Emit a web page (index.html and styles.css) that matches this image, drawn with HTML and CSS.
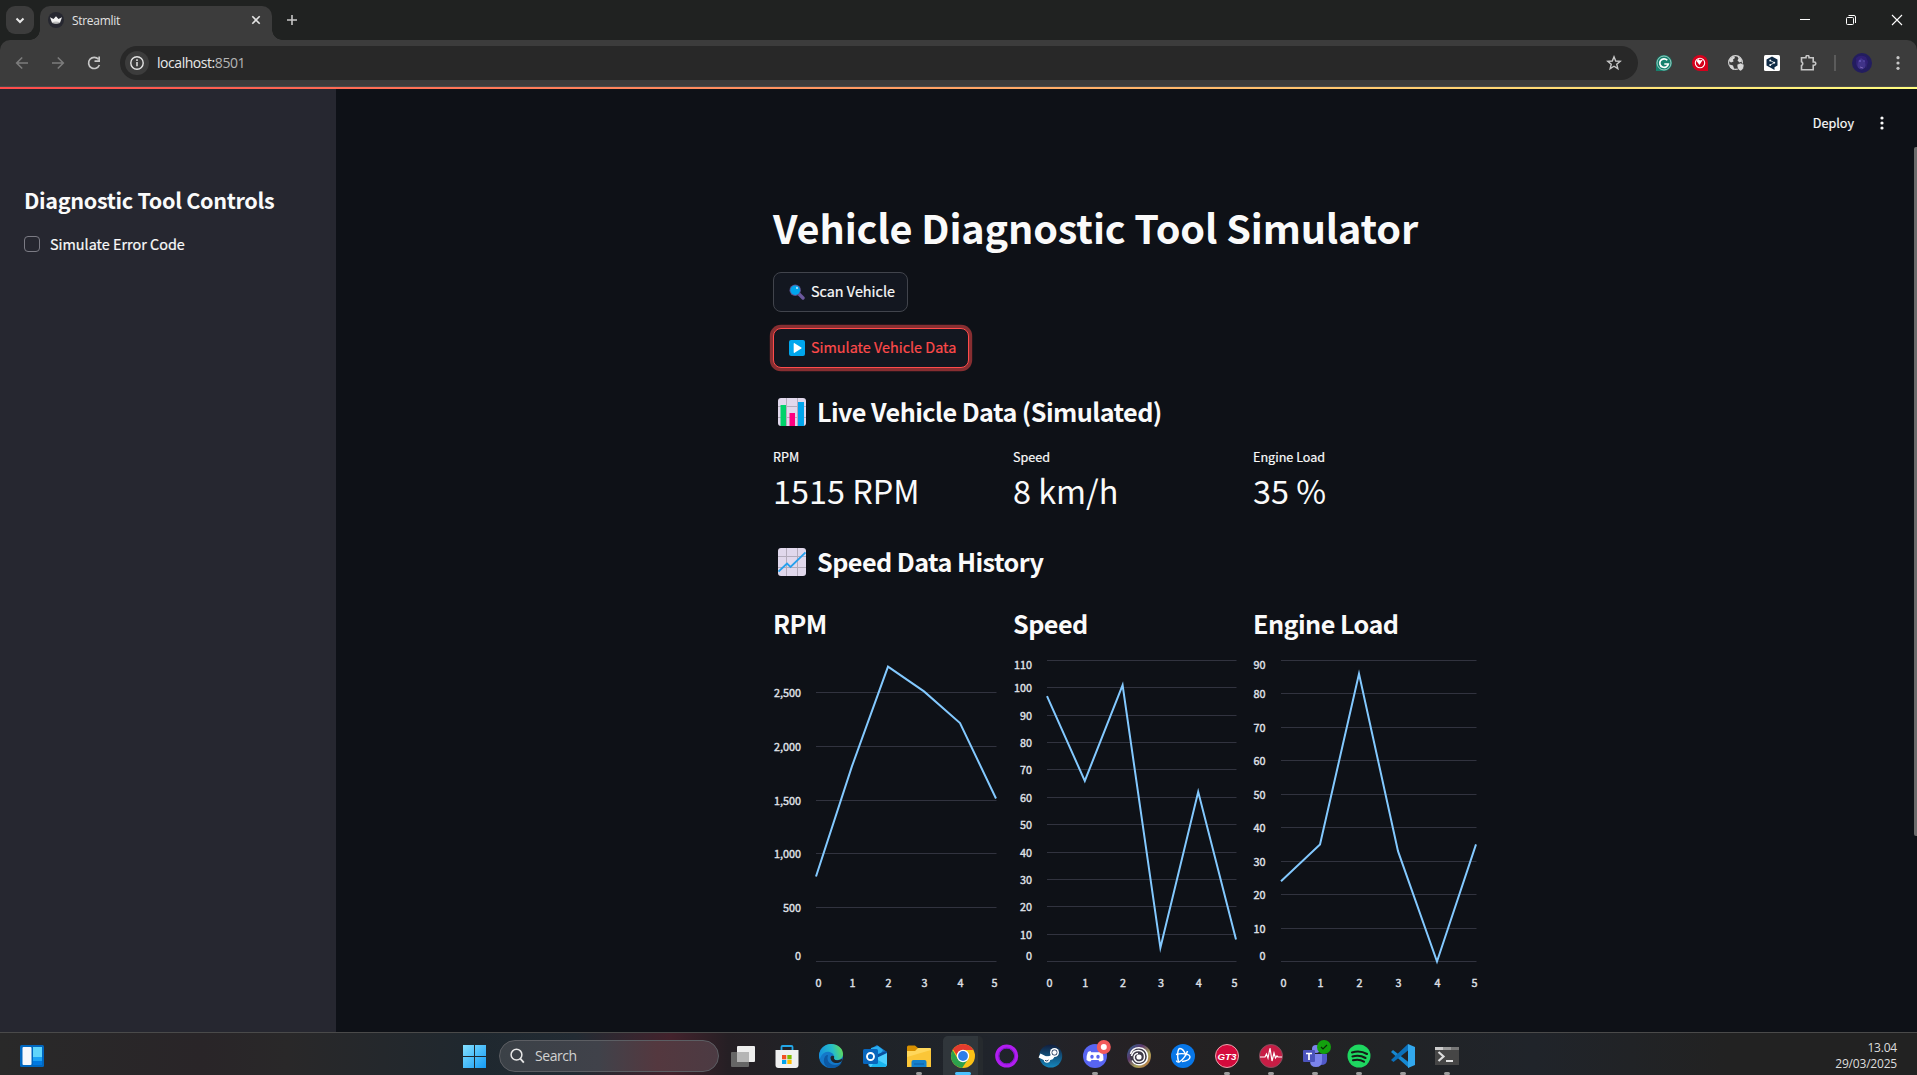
FILE: index.html
```html
<!DOCTYPE html>
<html lang="en">
<head>
<meta charset="utf-8">
<title>Streamlit</title>
<link rel="stylesheet" href="styles.css">
</head>
<body>
<div class="screen">
  <header class="tabbar">
    <div class="tabsearch"><svg width="28" height="28"><path d="M10.5 12.5l3.5 3.5 3.5-3.5" fill="none" stroke="#e8e8e8" stroke-width="2"/></svg></div>
    <div class="tab">
      <svg class="favicon" width="16" height="16" viewBox="0 0 16 16"><circle cx="8" cy="8" r="8" fill="#262730"/><path d="M2 5.300l3.500 1.600L8 4.200l2.500 2.700L14 5.300 12 10.800Q8 12 4 10.800z" fill="#f2f2f2"/><path d="M4 10.300Q8 8.600 12 10.300v.700Q8 12.300 4 11z" fill="#bbb"/></svg>
      <span class="tabtitle">Streamlit</span>
      <svg class="tabclose" width="10" height="10"><path d="M1.300 1.300l7.400 7.400M8.700 1.300L1.300 8.700" stroke="#e3e3e3" stroke-width="1.600"/></svg>
    </div>
    <svg class="newtab" width="12" height="12"><path d="M6 1v10M1 6h10" stroke="#c7c7c7" stroke-width="1.600"/></svg>
    <div class="winbtns">
      <svg width="46" height="40"><path d="M18 19.500h10" stroke="#fff"/></svg>
      <svg width="46" height="40"><g fill="none" stroke="#fff"><rect x="18.500" y="17.500" width="7" height="7" rx="1"/><path d="M20.500 15.500h5.500a1.500 1.500 0 0 1 1.500 1.500v6"/></g></svg>
      <svg width="46" height="40"><path d="M18 15l10 10M28 15L18 25" stroke="#fff" stroke-width="1.100"/></svg>
    </div>
  </header>
  <div class="toolbar">
    <div class="nav">
      <svg width="36" height="36"><path d="M24 18H13M18.200 12.500L12.700 18l5.500 5.500" fill="none" stroke="#7c7c7c" stroke-width="1.600"/></svg>
      <svg width="36" height="36"><path d="M12 18h11M17.800 12.500l5.500 5.500-5.500 5.500" fill="none" stroke="#7c7c7c" stroke-width="1.600"/></svg>
      <svg width="36" height="36"><path d="M22.500 14.300A5.600 5.600 0 1 0 23.400 20" fill="none" stroke="#c7c7c7" stroke-width="1.700"/><path d="M24 11.500v5.500h-5.500v-1.700h3.800v-3.800z" fill="#c7c7c7"/></svg>
    </div>
    <div class="address">
      <svg class="info" width="24" height="24"><circle cx="12" cy="12" r="12" fill="#3c3c3c"/><circle cx="12" cy="12" r="6.200" fill="none" stroke="#e3e3e3" stroke-width="1.400"/><path d="M12 11v4.200M12 8.300v1.600" stroke="#e3e3e3" stroke-width="1.500"/></svg>
      <span class="url">localhost:<span>8501</span></span>
      <svg class="star" width="16" height="16" viewBox="0 0 16 16"><path d="M8 1.800l1.700 4.200 4.500.350-3.450 2.900 1.100 4.400L8 11.250l-3.850 2.400 1.100-4.400L1.800 6.350 6.300 6z" fill="none" stroke="#c7c7c7" stroke-width="1.400"/></svg>
    </div>
    <div class="exts">
      <svg width="16" height="16"><path d="M8 0a8 8 0 0 1 8 8 8 8 0 0 1-8 8H0V8a8 8 0 0 1 8-8z" fill="#16806d"/><circle cx="8" cy="8" r="7" fill="none" stroke="#d5efe9" stroke-width=".7"/><path d="M11.300 5.300A4.300 4.300 0 1 0 12.300 9H8.300" fill="none" stroke="#fff" stroke-width="1.700"/></svg>
      <svg width="16" height="16"><path d="M8 0a8 8 0 0 1 8 8v8H8A8 8 0 0 1 8 0z" fill="#d6001c"/><circle cx="8" cy="8" r="4.700" fill="none" stroke="#fff" stroke-width="1.100"/><path d="M4.500 6L6.500 4l1.500 1.500L11 4.500 7.500 10 6 8z" fill="#fff"/></svg>
      <svg width="16" height="16"><circle cx="7.500" cy="7.500" r="6.900" fill="none" stroke="#d6d6d6" stroke-width="1.100"/><path d="M2 3.500l4-2.500 1 2-2 1.500.5 2-2.500 1L1 6zM1.500 9.500l3.500 1 1 3-.5 1.500-3-2zM9 1l4 2.500 1 3-2.500 1-2-2 1-2z" fill="#d6d6d6"/><path d="M12.500 8l3.500 1.500c0 3.500-1 5.500-3.500 6.500-2.500-1-3.500-3-3.500-6.500z" fill="#d8d8d8" stroke="#3c3c3c" stroke-width=".6"/></svg>
      <svg width="16" height="16"><rect width="16" height="16" rx="1.500" fill="#fff"/><path d="M8 1.500l5.500 3v6l-3 1.800V15L8 13.500l-5.500-3v-6z" fill="#0f2b46"/><path d="M6.300 5.500l4 2.200-4 2.300" fill="none" stroke="#fff" stroke-width=".8"/><circle cx="6.200" cy="5.500" r=".9" fill="#fff"/><circle cx="10.300" cy="7.700" r=".9" fill="#fff"/><circle cx="6.200" cy="10" r=".9" fill="#fff"/></svg>
      <svg class="puzzle" width="17" height="17"><path d="M1.500 2.800H6V2a1.500 1.500 0 0 1 3 0v.8h4.200V7h1a1.600 1.600 0 0 1 0 3.200h-1v4.600H1.500v-4.300a2 2 0 0 0 0-3.700z" fill="none" stroke="#c7c7c7" stroke-width="1.600"/></svg>
      <i class="divider"></i>
      <svg class="avatar" width="20" height="20"><circle cx="10" cy="10" r="10" fill="#231d5f"/><ellipse cx="9.500" cy="10" rx="5" ry="6.500" fill="#403388"/><path d="M4 5q4-4 10-1l2 5-2 7-1-8-4-3-3 3-1 7z" fill="#302075"/><circle cx="8" cy="8" r="1" fill="#6657b8"/><circle cx="12" cy="8" r=".8" fill="#5f50af"/><path d="M8 14l3 1" stroke="#7861b0"/></svg>
      <svg class="kebab" width="4" height="16"><g fill="#c7c7c7"><circle cx="2" cy="2.700" r="1.600"/><circle cx="2" cy="8" r="1.600"/><circle cx="2" cy="13.300" r="1.600"/></g></svg>
    </div>
  </div>
  <main class="app">
    <aside class="sidebar">
      <h2>Diagnostic Tool Controls</h2>
      <label class="check"><i></i><span>Simulate Error Code</span></label>
    </aside>
    <section class="content">
      <div class="appmenu"><span>Deploy</span><svg width="4" height="14"><g fill="#fafafa"><circle cx="2" cy="2" r="1.600"/><circle cx="2" cy="7" r="1.600"/><circle cx="2" cy="12" r="1.600"/></g></svg></div>
      <div class="scroll"></div>
      <div class="block">
        <h1>Vehicle Diagnostic Tool Simulator</h1>
        <button class="btn"><svg width="16" height="16" viewBox="0 0 16 16"><path d="M9.500 9.500L14 14" stroke="#6b589c" stroke-width="3.400" stroke-linecap="round"/><circle cx="6.200" cy="6.200" r="5.700" fill="#5c528f"/><circle cx="6.200" cy="6.200" r="4.800" fill="#00a6ed"/><ellipse cx="8" cy="3.900" rx=".9" ry="1.200" fill="#b8e8ff"/></svg><span>Scan Vehicle</span></button>
        <button class="btn active"><svg width="16" height="16" viewBox="0 0 16 16"><rect width="16" height="16" rx="2" fill="#00a6ed"/><path d="M4.700 3.700v8.600q0 1 .9.500l6.700-4.200q.8-.6 0-1.200L5.600 3.200q-.9-.5-.9.500z" fill="#fff"/></svg><span>Simulate Vehicle Data</span></button>
        <h3 class="live"><svg width="28" height="28"><rect width="28" height="28" rx="3" fill="#e1d8ec"/><path d="M8.500 0v28M19.500 0v28M0 8.500h28M0 19.500h28" stroke="#b4acbc"/><path d="M2.500 7H8v21H2.500z" fill="#00d26a"/><path d="M11.500 15h5.500v13h-5.500z" fill="#ff0080"/><path d="M20 4h6v24h-6z" fill="#00a6ed"/></svg><span>Live Vehicle Data (Simulated)</span></h3>
        <div class="cols metrics">
          <div><p>RPM</p><strong>1515 RPM</strong></div>
          <div><p>Speed</p><strong>8 km/h</strong></div>
          <div><p>Engine Load</p><strong>35 %</strong></div>
        </div>
        <h3 class="history"><svg width="28" height="28"><rect width="28" height="28" rx="3" fill="#e1d8ec"/><path d="M8.500 0v28M19.500 0v28M0 8.500h28M0 19.500h28" stroke="#b4acbc"/><path d="M.5 23.500L9 15.500l3.500 3.500L27.500 4.500" fill="none" stroke="#26a0ec" stroke-width="1.800"/></svg><span>Speed Data History</span></h3>
        <div class="cols charts">
          <div><h3>RPM</h3><svg class="chart" width="240" height="360"></svg></div>
          <div><h3>Speed</h3><svg class="chart" width="240" height="360"></svg></div>
          <div><h3>Engine Load</h3><svg class="chart" width="240" height="360"></svg></div>
        </div>
      </div>
    </section>
  </main>
  <footer class="taskbar">
    <svg class="widgets" width="24" height="22"><rect width="24" height="22" rx="1.500" fill="#0067c0"/><rect x="2.500" y="2" width="9" height="18" rx="1" fill="#f5f8fc"/><path d="M13 2h9v10h-9z" fill="#60d5fb"/><path d="M13 12h9v4h-9z" fill="#1ba2f5"/><path d="M13 16h9v4h-9z" fill="#0078e0"/></svg>
    <svg class="start" width="24" height="24"><defs><linearGradient id="win" x2="1" y2="1"><stop stop-color="#83e0ff"/><stop offset="1" stop-color="#149bf5"/></linearGradient></defs><path d="M0 1h11v11H0zM12 1h11v11H12zM0 13h11v11H0zM12 13h11v11H12z" fill="url(#win)"/></svg>
    <div class="search"><svg width="16" height="16"><circle cx="6.500" cy="6.700" r="5.400" fill="none" stroke="#e8e8e8" stroke-width="1.500"/><path d="M10.300 10.700l3.500 3.900" stroke="#e8e8e8" stroke-width="1.800"/></svg><span>Search</span></div>
    <div class="apps">
      <div><svg viewBox="0 0 24 24"><rect y="8" width="18" height="15" rx="1" fill="#666"/><rect x="6" y="2" width="18" height="16" rx="1" fill="#eee"/><path d="M6 8h12v10H6z" fill="#b5b5b5"/></svg></div>
      <div><svg viewBox="0 0 24 24"><path d="M6.500 7V3q0-1 1-1h9q1 0 1 1v4" fill="none" stroke="#23a7e8" stroke-width="1.800"/><path d="M.5 6h23v15q0 3-3 3h-17q-3 0-3-3z" fill="#f0f0f0"/><path d="M7 11h4.300v4.300H7z" fill="#f25022"/><path d="M12.300 11h4.300v4.300h-4.300z" fill="#7fba00"/><path d="M7 16h4.300v4H7z" fill="#00a4ef"/><path d="M12.300 16h4.300v4h-4.300z" fill="#ffb900"/></svg></div>
      <div><svg viewBox="0 0 24 24"><defs><linearGradient id="ed" x2="1" y1=".4" y2=".2"><stop stop-color="#1593dd"/><stop offset=".55" stop-color="#26bdc9"/><stop offset="1" stop-color="#68df4b"/></linearGradient></defs><circle cx="12" cy="12" r="12" fill="#1478c9"/><path d="M0 11C1 4 6 0 12 0c7 0 12 4.500 12 10 0 4-3 6-6.500 6-3 0-3.500-1.500-2.500-3 .5-4-6-7-10-4-3 2-4 6-4.500 6z" fill="url(#ed)"/><path d="M9 11.500c-2 5 2 9.500 7 9.500 3 0 5.500-1 7-3-2 4-6 6-10.500 6C6 24 3 17.500 6 12.500c1-1.500 3-2 3-1z" fill="#0c59a4"/><path d="M11.500 13.500c.2-2 3-2.500 3.800-.8-1 1.800 0 3.300 2.700 3.600 2.500.2 4.500-1 5.500-1.700l-.8 2.400c-1.500 1.500-3 2-5 2-3.500 0-6.200-2-6.200-5.500z" fill="#20242a"/></svg></div>
      <div><svg viewBox="0 0 24 24"><path d="M4 7l10-6 10 7v12q0 3-3 3H8q-3 0-3-3z" fill="#1478c9"/><path d="M8 4l7-2 5 4-4 6H8z" fill="#2aaef0"/><path d="M15 10l8-3 1 2-9 6z" fill="#0a4f9e"/><path d="M5 18L24 9v11q0 3-3 3H7z" fill="#4ccfff"/><path d="M13 15l11 6q-1 2-3 2H8z" fill="#19b4ee"/><rect y="5" width="15" height="15" rx="1.500" fill="#0866bd"/><circle cx="7.500" cy="12.500" r="3.500" fill="none" stroke="#fff" stroke-width="1.900"/></svg></div>
      <div class="run"><svg viewBox="0 0 24 24"><path d="M0 3q0-1.500 1.500-1.500H8L11 4h11q2 0 2 2v4H0z" fill="#d89000"/><path d="M0 7h8l3-3h12q1 0 1 1v18H0z" fill="#ffd75b"/><path d="M0 13l24-7v17H0z" fill="#fbc638"/><path d="M4.500 23v-5q0-2 2-2h11q2 0 2 2v5z" fill="#1481cb"/><path d="M7 20h10" stroke="#0e5ca6"/></svg></div>
      <div class="current"><svg viewBox="0 0 24 24"><circle cx="12" cy="12" r="12" fill="#fbc116"/><path d="M1.610 6A12 12 0 0 1 22.390 6H12z" fill="#e33b2e"/><path d="M1.610 6a12 12 0 0 0 9.500 18L17.200 15 12 12 6.800 15z" fill="#2da14c"/><path d="M2 5.300L7 13l5-7z" fill="#e33b2e"/><circle cx="12" cy="12" r="6.200" fill="#fff"/><circle cx="12" cy="12" r="4.900" fill="#2e7de9"/></svg></div>
      <div><svg viewBox="0 0 24 24"><circle cx="11.700" cy="12" r="9.500" fill="none" stroke="#b11df0" stroke-width="4"/><circle cx="11.700" cy="12" r="8" fill="none" stroke="#7c12c8"/></svg></div>
      <div><svg viewBox="0 0 24 24"><defs><linearGradient id="st" x2="0" y2="1"><stop stop-color="#111d3c"/><stop offset="1" stop-color="#1587bd"/></linearGradient></defs><circle cx="11.700" cy="12" r="11.500" fill="url(#st)"/><path d="M.5 11.500l7 3.500 5-1.500 3.500-5" fill="none" stroke="#fff" stroke-width="4.200"/><circle cx="15.500" cy="8.500" r="4.500" fill="#fff"/><circle cx="15.500" cy="8.500" r="2.900" fill="#172f55"/><circle cx="15.500" cy="8.500" r="2.200" fill="#fff"/><circle cx="8" cy="15.500" r="3.200" fill="#fff"/><path d="M6 16.300q2 1.700 3.500-.3" fill="none" stroke="#182f55" stroke-width=".9"/></svg></div>
      <div class="run"><svg viewBox="0 0 24 24"><circle cx="12" cy="12" r="12" fill="#5865f2"/><path d="M7.500 7q-2 .4-2.700 1.300Q3.200 12 3.500 16q2 1.500 4 1.500l1-1.500h7l1 1.500q2 0 4-1.500.3-4-1.300-7.700Q18.500 7.400 16.500 7l-.7 1.200H8.200z" fill="#fff"/><ellipse cx="9" cy="12.700" rx="1.700" ry="2" fill="#5865f2"/><ellipse cx="15" cy="12.700" rx="1.700" ry="2" fill="#5865f2"/><g transform="translate(20.800 3)"><circle r="7" fill="#f25b5b"/><circle r="3" fill="#fff"/></g></svg></div>
      <div><svg viewBox="0 0 24 24"><defs><linearGradient id="ub" x2="1" y2="1"><stop stop-color="#286d94"/><stop offset=".35" stop-color="#5b386d"/><stop offset=".65" stop-color="#a7a259"/><stop offset="1" stop-color="#c1653d"/></linearGradient></defs><circle cx="12" cy="12" r="12" fill="url(#ub)"/><circle cx="12" cy="12.500" r="9" fill="#3e3a48"/><g fill="none" stroke="#fff" stroke-width="1.500"><path d="M3.500 10C4.500 6 8 3.700 12 3.700c5 0 8.500 4 8.500 8.800A8.300 8.300 0 0 1 5 16.500"/><path d="M4.500 12c1-4 4-5.800 7.500-5.500 3.500.3 5.700 3 5.500 6.500a5.300 5.300 0 0 1-10.300 1.500C6.500 11.500 8.500 9.500 11 9.500"/></g><circle cx="12" cy="13" r="2.600" fill="#fff"/></svg></div>
      <div><svg viewBox="0 0 24 24"><circle cx="12" cy="12" r="12" fill="#0877e8"/><g fill="none" stroke="#fff" stroke-width="1.400"><path d="M7.500 18C6 12 6.500 4.500 9 4.500c2 0 4.500 3 6 7"/><path d="M5 10.500c5-1.500 14-1 14 2.500 0 2.500-4 4-8 4.500"/><path d="M16.500 7c-1 4-5.500 10-8.500 11-1.500.4-2.500-.5-2.500-1.500"/></g></svg></div>
      <div class="run"><svg viewBox="0 0 24 24"><circle cx="12" cy="12" r="11.500" fill="#d40a3c" stroke="#e6a6ae"/><text x="12" y="15.500" class="gt" text-anchor="middle" textLength="19" lengthAdjust="spacingAndGlyphs">GT3</text></svg></div>
      <div class="run"><svg viewBox="0 0 24 24"><circle cx="12" cy="12" r="11.500" fill="#c71d45" stroke="#83505e"/><path d="M1 13h5l1.500-3 1.500 4 2-10 2 13 2-8 1.500 5 1.500-2 1 1h4" fill="none" stroke="#fff" stroke-width="1.200"/></svg></div>
      <div class="run"><svg viewBox="0 0 24 24"><circle cx="13" cy="5" r="4" fill="#7b83eb"/><circle cx="20" cy="7" r="2.500" fill="#5059c9"/><path d="M16 10h8v6q0 5-6 5z" fill="#5059c9"/><path d="M7 10h12v7q0 6-6 6t-6-6z" fill="#7b83eb"/><rect y="6" width="12" height="12" rx="1" fill="#4b53bc"/><path d="M3 9.500h6M6 9v7" stroke="#fff" stroke-width="1.700"/><circle cx="21" cy="3" r="7" fill="#13a10e"/><path d="M18 3l2 2 4-4" fill="none" stroke="#092d08" stroke-width="1.200"/></svg></div>
      <div class="run"><svg viewBox="0 0 24 24"><circle cx="12" cy="12" r="11.500" fill="#1ed760"/><path d="M5 8.500q8-2.500 15 1.500M5.500 12.500q7-2 13 1.500M6 16.300q6-1.700 11 1.300" fill="none" stroke="#161b18" stroke-width="2.100" stroke-linecap="round"/></svg></div>
      <div class="run"><svg viewBox="0 0 24 24"><path d="M0 8l2-2 16 12.500v5.500z" fill="#1689d3"/><path d="M17 0v6.500L2.500 18 0 16z" fill="#0c71bb"/><path d="M17 0l7 3v18l-7 3z" fill="#32a8ed"/></svg></div>
      <div class="run"><svg viewBox="0 0 24 24"><path d="M0 3h24v18H0z" fill="#464646"/><path d="M0 3h8v3H0z" fill="#ccc"/><path d="M8 3h8v3H8z" fill="#9b9b9b"/><path d="M16 3h8v3h-8z" fill="#777"/><path d="M3.500 8l5 4.500-5 4.500" fill="none" stroke="#ddd" stroke-width="2.200"/><path d="M11 17h7" stroke="#fff" stroke-width="1.700"/></svg></div>
    </div>
    <div class="clock"><span>13.04</span><span>29/03/2025</span></div>
  </footer>
</div>
<script src="charts.js"></script>
</body>
</html>
```
FILE: charts.js
```js
// Line charts: left/right edges of the plot area inside each 240px column.
const charts = [
  { left: 43.5, right: 223.5, max: 2797, step: 500, labelX: 28, data: [790, 1815, 2740, 2510, 2216, 1515] },
  { left: 34.5, right: 223.5, max: 110, step: 10, labelX: 19, data: [97, 66, 101, 5, 62, 8] },
  { left: 28.5, right: 223.5, max: 90, step: 10, labelX: 12.5, data: [24, 35, 86, 33, 0, 35] }
];
const TOP = 10.5, HEIGHT = 301;

document.querySelectorAll('.chart').forEach((svg, i) => {
  const c = charts[i];
  const y = v => TOP + HEIGHT * (1 - v / c.max);
  const x = n => c.left + (c.right - c.left) * n / 5;
  let out = '';
  for (let v = 0; v <= c.max; v += c.step) {
    const gy = Math.floor(y(v)) + 0.5;
    const shift = v === 0 ? -1.5 : v === c.max ? 8.5 : 4.5;
    out += `<path class="grid" d="M${c.left - 0.5} ${gy}H${c.right}"/>`;
    out += `<text x="${c.labelX}" y="${gy + shift}" text-anchor="end">${v.toLocaleString('en-US')}</text>`;
  }
  for (let n = 0; n < 6; n++) {
    const nudge = n === 0 ? 2 : n === 5 ? -2 : 0;
    out += `<text x="${x(n) + nudge}" y="337" text-anchor="middle">${n}</text>`;
  }
  const pts = c.data.map((v, n) => `${(x(n) - 0.5).toFixed(1)},${y(v).toFixed(1)}`).join(' ');
  out += `<polyline class="line" points="${pts}"/>`;
  svg.innerHTML = out;
});
```
FILE: styles.css
```css
* { box-sizing: border-box; }
body { margin: 0; background: #0e1117; overflow: hidden; }
svg { display: block; flex: none; }
h1, h2, h3, p { margin: 0; }

.screen { width: 1917px; height: 1075px; display: flex; flex-direction: column; background: #202221; font-family: "Noto Sans CJK JP", "Noto Sans CJK SC", sans-serif; color: #fafafa; }

/* browser chrome */
.tabbar { height: 40px; background: #202221; display: flex; padding: 6px 0 0 6px; flex: none; }
.tabsearch { width: 28px; height: 28px; border-radius: 9px; background: #3c3c3c; }
.tab { width: 232px; height: 34px; margin-left: 6px; background: #3c3c3c; border-radius: 10px 10px 0 0; display: flex; align-items: center; padding: 0 11px 6px 8px; position: relative; }
.tab::before, .tab::after { content: ""; position: absolute; bottom: 0; width: 10px; height: 10px; }
.tab::before { left: -10px; background: radial-gradient(circle at 0 0, transparent 9.5px, #3c3c3c 10px); }
.tab::after { right: -10px; background: radial-gradient(circle at 100% 0, transparent 9.5px, #3c3c3c 10px); }
.tabtitle { margin: 2px 0 0 8px; flex: 1; font: 12px/16px "Open Sans", sans-serif; letter-spacing: -0.3px; color: #e3e3e3; }
.newtab { margin: 8px 0 0 14px; }
.winbtns { margin: -6px -3px 0 auto; display: flex; }
.toolbar { height: 47px; background: #3c3c3c; border-bottom: 1px solid #4a4a4a; border-radius: 10px 10px 0 0; display: flex; padding: 6px 17px 0 4px; flex: none; }
.nav { display: flex; height: 34px; align-items: center; }
.address { width: 1518px; height: 34px; border-radius: 17px; background: #282828; margin-left: 8px; display: flex; align-items: center; padding: 0 16px 0 5px; }
.url { margin-left: 8px; flex: 1; font: 14px/20px "Open Sans", sans-serif; letter-spacing: -0.45px; color: #e8e8e8; }
.url span { color: #b5b5b5; }
.exts { display: flex; align-items: center; height: 34px; margin-left: 18px; gap: 20px; }
.puzzle { margin-right: -3px; }
.divider { width: 2px; height: 16px; background: #5b5b5b; }
.avatar { margin-left: -4px; }
.kebab { margin-left: 4px; }

/* streamlit page */
.app { flex: 1; display: flex; background: #0e1117; position: relative; }
.app::before { content: ""; position: absolute; z-index: 2; left: 0; right: 0; top: 0; height: 2px; background: linear-gradient(90deg, #ff4b4b, #fffd80); }
.sidebar { width: 336px; background: #262730; padding: 98px 24px 0; }
.sidebar h2 { font-size: 21.6px; line-height: 29px; font-weight: 600; letter-spacing: -0.33px; white-space: nowrap; }
.check { display: flex; margin-top: 18px; gap: 10px; align-items: center; height: 24px; font-size: 14.4px; -webkit-text-stroke: 0.2px; }
.check span { margin-top: -2px; }
.check i { width: 16px; height: 16px; border: 1px solid #7b7b84; border-radius: 4px; }
.content { flex: 1; position: relative; }
.appmenu { position: absolute; right: 33px; top: 24px; height: 24px; display: flex; align-items: center; gap: 26px; font-size: 12.6px; -webkit-text-stroke: 0.2px; }
.appmenu span { margin-top: -2px; }
.scroll { position: absolute; right: 0; top: 60px; width: 3px; height: 689px; background: #6b6b6b; border-radius: 2px 0 0 2px; }
.block { margin-left: 437px; width: 704px; padding-top: 113px; }
h1 { font-size: 39.6px; line-height: 53px; font-weight: 700; letter-spacing: -0.13px; white-space: nowrap; }
h3 { font-size: 25.2px; line-height: 34px; font-weight: 600; letter-spacing: -0.56px; white-space: nowrap; }
.btn { display: flex; align-items: center; gap: 6px; height: 40px; padding: 0 12px 0 15px; border: 1px solid #41444c; border-radius: 8px; background: #131720; color: #fafafa; font: 14.4px/22px "Noto Sans CJK JP", sans-serif; -webkit-text-stroke: 0.2px; white-space: nowrap; margin-top: 19px; }
.btn span { margin-top: -2px; }
.btn.active { margin-top: 16px; border-color: #ff4b4b; color: #ff4b4b; box-shadow: 0 0 0 3.2px rgba(255, 75, 75, .5); }
.live, .history { display: flex; align-items: center; gap: 11px; padding-left: 5px; height: 34px; }
.live span, .history span { margin-top: -2px; }
.live { margin-top: 27px; }
.cols { display: grid; grid-template-columns: 240px 240px 240px; }
.metrics { margin-top: 18px; }
.metrics p { font-size: 12.6px; line-height: 20px; -webkit-text-stroke: 0.2px; }
.metrics strong { display: block; font-size: 32.4px; line-height: 46px; font-weight: 400; white-space: nowrap; }
.history { margin-top: 32px; }
.charts { margin-top: 27px; }
.charts h3 { height: 42px; }
.chart { overflow: visible; margin-top: 2px; }
.chart text { font-size: 10.8px; font-weight: 400; fill: #e0e4eb; stroke: #e0e4eb; stroke-width: .35px; }
.grid { stroke: #31333f; fill: none; }
.line { stroke: #83c9ff; stroke-width: 2; fill: none; stroke-linejoin: miter; stroke-miterlimit: 10; }

/* taskbar */
.taskbar { height: 43px; flex: none; border-top: 1px solid #4a4a4a; background: linear-gradient(90deg, #292929 0, #292528 10.500%, #292829 15%, #1f282f 25%, #222b33 30%, #43222c 35%, #251f24 38%, #1f2327 43%, #20242b 52%, #252124 59%, #222 65%, #20242a 80%, #222 90%); display: flex; }
.widgets { margin: 12px 0 0 20px; }
.start { margin: 11px 0 0 419px; }
.search { width: 220px; height: 32px; margin: 7px 0 0 12px; border-radius: 16px; border: 1px solid #5c5e63; background: linear-gradient(90deg, #3b4147, #40424a 45%, #54383f 72%, #4c3b43); display: flex; align-items: center; gap: 9px; padding-left: 10px; font: 14px/20px "Open Sans", sans-serif; letter-spacing: -0.45px; color: #d2d2d2; }
.apps { display: flex; margin-left: 2px; }
.apps div { width: 44px; height: 42px; padding: 11px 10px 0; position: relative; }
.apps svg { width: 24px; height: 24px; overflow: visible; }
.run::after, .current::after { content: ""; position: absolute; bottom: 0; left: 19px; width: 6px; height: 3px; border-radius: 2px; background: #9b9b9b; }
.current::after { left: 14px; width: 16px; background: #4cc2ff; }
.current::before { content: ""; position: absolute; left: 2px; top: 3px; width: 40px; height: 39px; border-radius: 5px 5px 0 0; background: linear-gradient(90deg, #30363b 35px, #262a2e 35px); }
.current svg { position: relative; }
.gt { font: italic 900 9px "Liberation Sans", sans-serif; fill: #fff; }
.clock { margin: 7px 20px 0 auto; display: flex; flex-direction: column; text-align: right; font: 12px/16px "Open Sans", sans-serif; letter-spacing: -0.2px; color: #ddd; }
```
